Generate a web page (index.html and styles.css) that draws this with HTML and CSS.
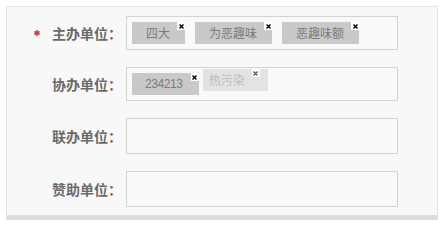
FILE: index.html
```html
<!DOCTYPE html>
<html lang="zh-CN">
<head>
<meta charset="utf-8">
<title>单位</title>
<link rel="stylesheet" href="styles.css">
</head>
<body>
<div class="panel">
  <div class="row">
    <div class="label"><svg class="star" width="6" height="6" viewBox="0 0 6 6"><g stroke="#c8404f" stroke-width="1.6"><line x1="3" y1="0" x2="3" y2="6"/><line x1="0.4" y1="1.5" x2="5.6" y2="4.5"/><line x1="0.4" y1="4.5" x2="5.6" y2="1.5"/></g></svg>主办单位：</div>
    <div class="box">
      <span class="tag">四大<span class="close"><svg width="5" height="5" viewBox="0 0 5 5"><path d="M0.5 0.5L4.5 4.5M4.5 0.5L0.5 4.5" stroke="#000" stroke-width="1.4"/></svg></span></span>
      <span class="tag">为恶趣味<span class="close"><svg width="5" height="5" viewBox="0 0 5 5"><path d="M0.5 0.5L4.5 4.5M4.5 0.5L0.5 4.5" stroke="#000" stroke-width="1.4"/></svg></span></span>
      <span class="tag">恶趣味额<span class="close"><svg width="5" height="5" viewBox="0 0 5 5"><path d="M0.5 0.5L4.5 4.5M4.5 0.5L0.5 4.5" stroke="#000" stroke-width="1.4"/></svg></span></span>
    </div>
  </div>
  <div class="row">
    <div class="label">协办单位：</div>
    <div class="box">
      <span class="tag tag--num">234213<span class="close"><svg width="5" height="5" viewBox="0 0 5 5"><path d="M0.5 0.5L4.5 4.5M4.5 0.5L0.5 4.5" stroke="#000" stroke-width="1.4"/></svg></span></span>
      <span class="tag tag--ghost">热污染<span class="close close--ghost"><svg width="5" height="5" viewBox="0 0 5 5"><path d="M0.5 0.5L4.5 4.5M4.5 0.5L0.5 4.5" stroke="#555" stroke-width="1.2"/></svg></span></span>
    </div>
  </div>
  <div class="row">
    <div class="label">联办单位：</div>
    <div class="box box--empty"></div>
  </div>
  <div class="row">
    <div class="label">赞助单位：</div>
    <div class="box box--empty"></div>
  </div>
</div>
</body>
</html>
```

FILE: styles.css
```css
html, body {
  margin: 0;
  padding: 0;
  background: #ffffff;
}

body {
  font-family: "Noto Sans CJK SC", "Liberation Sans", sans-serif;
}

.panel {
  box-sizing: border-box;
  width: 432px;
  margin: 6px 0 0 6px;
  background: #f8f8f8;
  border: 1px solid #e4e4e4;
  border-bottom: 5px solid #dcdcdc;
  padding: 9px 0 8px 0;
  display: flex;
  flex-direction: column;
  gap: 17px;
}

.row {
  display: flex;
  align-items: center;
}

.label {
  width: 115px;
  margin-right: 4px;
  display: flex;
  align-items: center;
  justify-content: flex-end;
  font-size: 14px;
  font-weight: bold;
  color: #6a6a6a;
  line-height: 20px;
  white-space: nowrap;
}

.star {
  display: block;
  margin-right: 12px;
}

.box {
  box-sizing: border-box;
  width: 272px;
  min-height: 34px;
  border: 1px solid #d3d3d3;
  background: #f9f9f9;
  padding: 5px 0 5px 5px;
  display: flex;
  align-items: center;
}

.box--empty {
  height: 36px;
}

.tag {
  position: relative;
  display: block;
  height: 22px;
  line-height: 22px;
  padding: 0 15px 0 14px;
  margin-right: 10px;
  background: #c9c9c9;
  color: #7b7b7b;
  font-size: 12px;
  white-space: nowrap;
}

.tag--num {
  font-family: "Liberation Sans", sans-serif;
  letter-spacing: -0.4px;
  padding: 0 16px 0 13px;
}

.tag--ghost {
  margin-left: -6px;
  margin-top: -4px;
  margin-bottom: 4px;
  padding: 0 23px 0 6px;
  background: #e3e3e3;
  color: #bcbcbc;
}

.close {
  position: absolute;
  top: 0;
  right: 0;
  width: 8px;
  height: 8px;
  background: #ffffff;
  display: flex;
  align-items: center;
  justify-content: center;
}

.close svg {
  display: block;
}

.close--ghost {
  right: 8px;
}
```
